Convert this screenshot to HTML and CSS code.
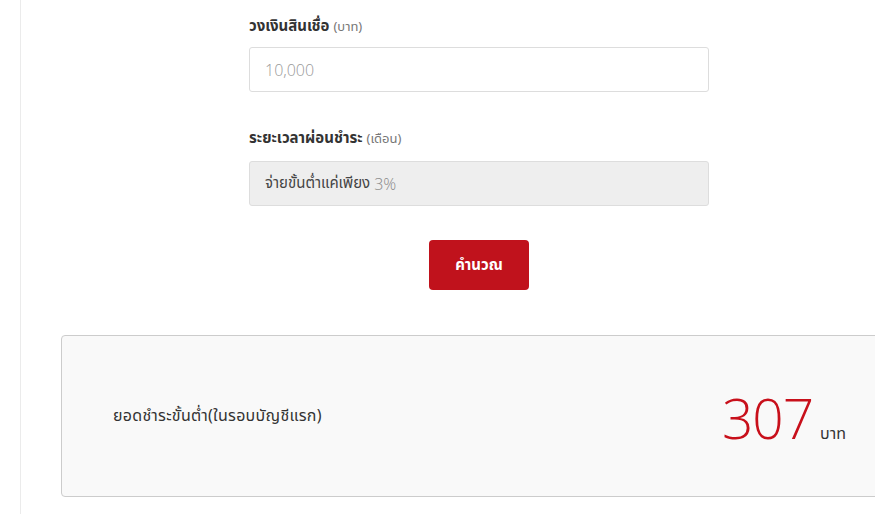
FILE: index.html
```html
<!DOCTYPE html>
<html lang="th">
<head>
<meta charset="utf-8">
<link rel="stylesheet" href="styles.css">
</head>
<body>
<div class="page">
  <div class="content">
    <form class="calc">
      <div class="field">
        <label class="label">วงเงินสินเชื่อ <span class="unit">(บาท)</span></label>
        <div class="input">10,000</div>
      </div>
      <div class="field">
        <label class="label">ระยะเวลาผ่อนชำระ <span class="unit">(เดือน)</span></label>
        <div class="select"><span class="thai">จ่ายขั้นต่ำแค่เพียง</span> <span class="num">3%</span></div>
      </div>
      <div class="actions">
        <button type="button" class="btn">คำนวณ</button>
      </div>
    </form>
    <div class="result">
      <div class="result-label">ยอดชำระขั้นต่ำ(ในรอบบัญชีแรก)</div>
      <div class="result-value"><span class="amount">307</span><span class="currency">บาท</span></div>
    </div>
  </div>
</div>
</body>
</html>
```
FILE: styles.css
```css
html, body {
  margin: 0;
  padding: 0;
  background: #fff;
  overflow: hidden;
}
body {
  font-family: "Noto Sans", "Noto Sans Thai", "DejaVu Sans", sans-serif;
  color: #333;
}
.page {
  margin-left: 20px;
  border-left: 1px solid #ebebeb;
  min-height: 514px;
  padding-left: 40px;
  width: 836px;
}
.content {
  width: 836px;
}
.calc {
  width: 460px;
  margin: 0 auto;
  padding-top: 14px;
}
.field {
  margin-bottom: 34px;
}
.label {
  display: block;
  font-size: 15px;
  font-weight: 700;
  color: #333;
  line-height: 22px;
  margin-bottom: 12px;
}
.unit {
  font-size: 13px;
  font-weight: 400;
  color: #777;
}
.input, .select {
  box-sizing: border-box;
  height: 45px;
  border: 1px solid #ddd;
  border-radius: 3px;
  padding: 0 15px;
  display: flex;
  align-items: center;
  font-size: 15px;
}
.field:first-child .label {
  margin-bottom: 10px;
}
.input {
  background: #fff;
  color: #999;
  font-family: "Open Sans", sans-serif;
  font-weight: 300;
  font-size: 16px;
}
.select {
  background: #eee;
  color: #444;
  font-size: 15px;
}
.select .num {
  color: #888;
  font-family: "Open Sans", sans-serif;
  font-weight: 300;
  font-size: 16px;
  margin-left: 4px;
}
.actions {
  display: flex;
  justify-content: center;
  margin-top: 3px;
}
.btn {
  width: 100px;
  height: 50px;
  border: none;
  border-radius: 4px;
  background: #c0121c;
  color: #fff;
  font-family: inherit;
  font-size: 15px;
  font-weight: 700;
}
.result {
  margin-top: 45px;
  box-sizing: border-box;
  height: 162px;
  border: 1px solid #ccc;
  border-radius: 4px;
  background: #f9f9f9;
  display: flex;
  align-items: center;
  justify-content: space-between;
  padding: 0 50px 0 51px;
}
.result-label {
  font-size: 16px;
  color: #333;
  letter-spacing: 0.3px;
}
.result-value {
  display: flex;
  align-items: baseline;
  margin-top: 4px;
}
.amount {
  font-family: "Open Sans", sans-serif;
  font-weight: 300;
  font-size: 55px;
  color: #c8101b;
  line-height: 1;
  letter-spacing: -1px;
}
.currency {
  font-size: 16px;
  color: #333;
  margin-left: 7px;
}
```
